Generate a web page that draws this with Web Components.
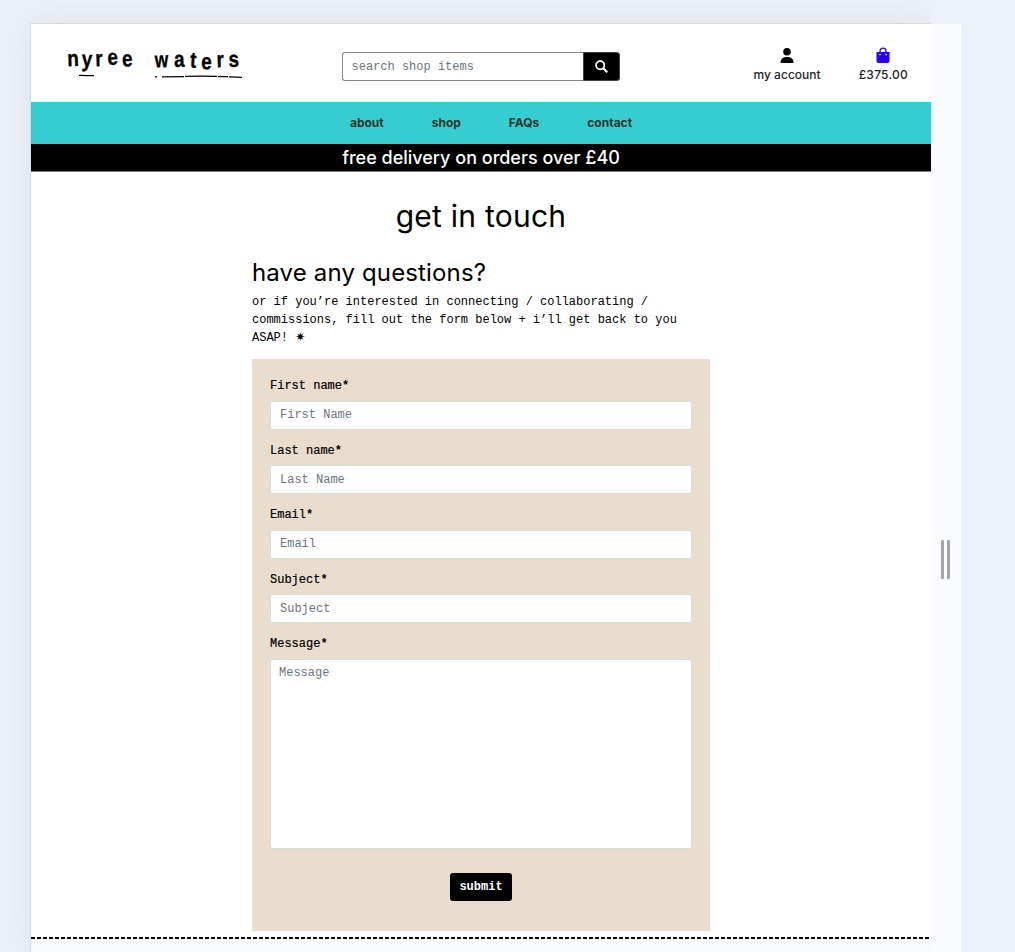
<!DOCTYPE html>
<html lang="en"><head><meta charset="utf-8"><title>nyree waters – get in touch</title>
<style>
html,body{margin:0;height:100%;overflow:hidden}
body{background:#ecf0f9;font-family:Inter,"Liberation Sans",sans-serif;color:#000}
</style></head><body>
<preview-frame>
  <site-header></site-header>
  <site-nav></site-nav>
  <delivery-banner>free delivery on orders over £40</delivery-banner>
  <contact-page></contact-page>
</preview-frame>
<script>
const define=(name,html)=>{
  const t=document.createElement('template');t.innerHTML=html;
  customElements.define(name,class extends HTMLElement{
    constructor(){super();this.attachShadow({mode:'open'}).append(t.content.cloneNode(true));}
  });
};
define('preview-frame',`<style>
:host{display:grid;grid-template-columns:901px 30px;padding:23px 0 0 30px;width:931px;height:929px}
.page{box-sizing:border-box;border:solid #d8dbdf;border-width:1px 0 0 1px;background:#fff;box-shadow:0 0 30px rgba(195,213,213,.4);display:flex;flex-direction:column;clip-path:inset(-30px 0 0 -30px)}
.handle{margin-top:1px;background:#f9fbff;display:flex;justify-content:center;gap:3px;padding:516px 1px 0 0}
.handle i{width:3px;height:39px;background:#a5a5a5;border-radius:1px}
</style><div class="page"><slot></slot></div><div class="handle"><i></i><i></i></div>`);

define('brand-logo',`<style>:host{display:block;width:180px;height:46px}svg{display:block}
text{font:bold 22.5px "Liberation Sans",sans-serif;stroke:#000;stroke-width:.35px}</style>
<svg width="180" height="46" viewBox="0 -10 180 46">
<g id="letters"></g>
<path d="M12 29.3l8 .4 7-.1M88 30.9h2M95 30.8l22-.1M118 30.3l16-.1 16 .2M151 30.6l10 .1M162 30.9l13 .5" fill="none" stroke="#000" stroke-width="1.2"/></svg>`);

define('site-header',`<style>
:host{display:grid;grid-template-columns:310.5px 278.5px 1fr;height:78px;flex:none}
brand-logo{margin:12px 0 0 36px}
form{display:flex;height:29px;margin-top:27.5px;align-self:start}
input{box-sizing:border-box;width:241px;height:29px;border:1px solid #888;border-right:0;border-radius:3px 0 0 3px;padding:2px 0 0 9px;font:12px "Liberation Mono","Courier New",monospace;outline:0}
input::placeholder{color:#6c757d;opacity:1}
button{box-sizing:border-box;width:37.5px;height:29px;background:#000;border:1px solid #444;border-radius:0 3px 3px 0;padding:0;display:grid;place-items:center}
.links{display:flex;justify-content:flex-end;gap:38px;padding:23px 23px 0 0}
.links a{display:flex;flex-direction:column;align-items:center;font-size:12px;line-height:18px;font-weight:500;letter-spacing:.24px;color:#212529}
.links a.account{letter-spacing:.02px}
.links svg{display:block;margin-bottom:1.5px}
</style>
<brand-logo></brand-logo>
<form><input placeholder="search shop items" aria-label="search"><button type="button" aria-label="go"><svg width="13" height="13" viewBox="0 0 13 13" fill="none" stroke="#fff" stroke-width="1.8"><circle cx="5.2" cy="5.2" r="4.1"/><path d="M8.2 8.2l4.1 4.1" stroke-width="2.1"/></svg></button></form>
<div class="links">
<a class="account"><svg width="16" height="17" viewBox="0 0 16 17"><circle cx="8" cy="4.8" r="3.8"/><path d="M1.5 16c0-4.2 2.5-6 6.5-6s6.5 1.8 6.5 6z"/></svg>my account</a>
<a><svg width="16" height="17" viewBox="0 0 16 17"><path d="M5 6V4.2a3 3 0 0 1 6 0V6" fill="none" stroke="#2800ff" stroke-width="1.3"/><path d="M1.5 5h13v9a2 2 0 0 1-2 2h-9a2 2 0 0 1-2-2z" fill="#2800ff"/><circle cx="5" cy="7.6" r=".8" fill="#fff"/><circle cx="11" cy="7.6" r=".8" fill="#fff"/></svg>£375.00</a>
</div>`);

define('site-nav',`<style>
:host{display:flex;flex:none;height:42px;background:#36cdd0;justify-content:center;align-items:center;gap:48px;padding-left:20px;box-sizing:border-box}
a{font-size:12px;font-weight:700;color:#29352d;line-height:18px}
</style><a>about</a><a>shop</a><a>FAQs</a><a>contact</a>`);

define('delivery-banner',`<style>
:host{display:block;flex:none;box-sizing:border-box;height:28px;background:#000;border-bottom:1px solid #777;color:#fff;text-align:center;font-size:18px;font-weight:500;line-height:27px}
</style><slot></slot>`);

define('contact-page',`<style>
:host{display:flex;flex-direction:column;flex:1;font:12px/18px "Liberation Mono","Courier New",monospace;min-height:0}
h1,h2{font-family:Inter,sans-serif;font-weight:400;margin:0}
h1{font-size:30px;line-height:36px;text-align:center;padding-top:26px;letter-spacing:.25px}
main{width:458px;margin:0 auto}
h2{font-size:24px;line-height:29px;margin-top:24px;letter-spacing:.15px}
p{margin:6px 0 12px;height:54px;font-family:"Liberation Mono","DejaVu Sans",monospace}
.form{box-sizing:border-box;height:572px;background:#e9dece;padding:18px 18px 0}
.submit{display:block;margin:24px auto 0;width:62px;height:28px;border:0;border-radius:3px;background:#000;color:#fff;font:bold 12px/18px "Liberation Mono",monospace;padding:0}
.foot{flex:1;margin-top:6px;background:#f8f9fb}
.dash{height:2px;background:repeating-linear-gradient(90deg,#000 0 4px,#fff 4px 6px)}
</style>
<h1>get in touch</h1>
<main><h2>have any questions?</h2>
<p>or if you’re interested in connecting / collaborating / commissions, fill out the form below + i’ll get back to you ASAP! ✷</p>
<div class="form">
<form-field label="First name" hint="First Name"></form-field>
<form-field label="Last name" hint="Last Name"></form-field>
<form-field label="Email" hint="Email"></form-field>
<form-field label="Subject" hint="Subject"></form-field>
<form-field label="Message" hint="Message" multiline></form-field>
<button class="submit" type="button">submit</button>
</div></main>
<div class="foot"><div class="dash"></div></div>`);

customElements.define('form-field',class extends HTMLElement{
  connectedCallback(){
    if(this.shadowRoot)return;
    const r=this.attachShadow({mode:'open'}),tag=this.hasAttribute('multiline')?'textarea':'input';
    r.innerHTML=`<style>
:host{display:block;height:64.5px}
:host([multiline]){height:auto}
label{display:block;height:18px;margin-bottom:5.8px;-webkit-text-stroke:.2px #000}
b{font-weight:700;-webkit-text-stroke:0}
input,textarea{display:block;box-sizing:border-box;width:100%;border:1px solid #d9dcdf;border-radius:3px;padding:0 9px;background:#fff;font:12px/18px "Liberation Mono","Courier New",monospace;outline:0}
textarea{height:190px;padding:4px 8px;resize:none}
input{height:29px;padding-top:.4px}
::placeholder{color:#6c757d;opacity:1}
</style><label>${this.getAttribute('label')}<b>*</b></label><${tag} placeholder="${this.getAttribute('hint')}"></${tag}>`;
  }
});

const logo=document.querySelector('site-header').shadowRoot.querySelector('brand-logo').shadowRoot.querySelector('#letters');
[['n',.6,20.2,-2],['y',14.5,20.4,2],['r',28.6,20.2,-2],['e',40.8,19,-3],['e',55.2,20.6,-2],
 ['w',88,21.4,-2],['a',107.3,21,-2],['t',122.8,21.4,3],['e',134,23,2],['r',149.8,21.2,-2],['s',161.7,21,-2]].forEach(([c,x,y,a])=>{
  const t=document.createElementNS('http://www.w3.org/2000/svg','text');
  t.textContent=c;t.setAttribute('transform',`translate(${x} ${y}) rotate(${a}) scale(${c==='w'?.77:.84} 1)`);logo.append(t);
});
</script></body></html>
